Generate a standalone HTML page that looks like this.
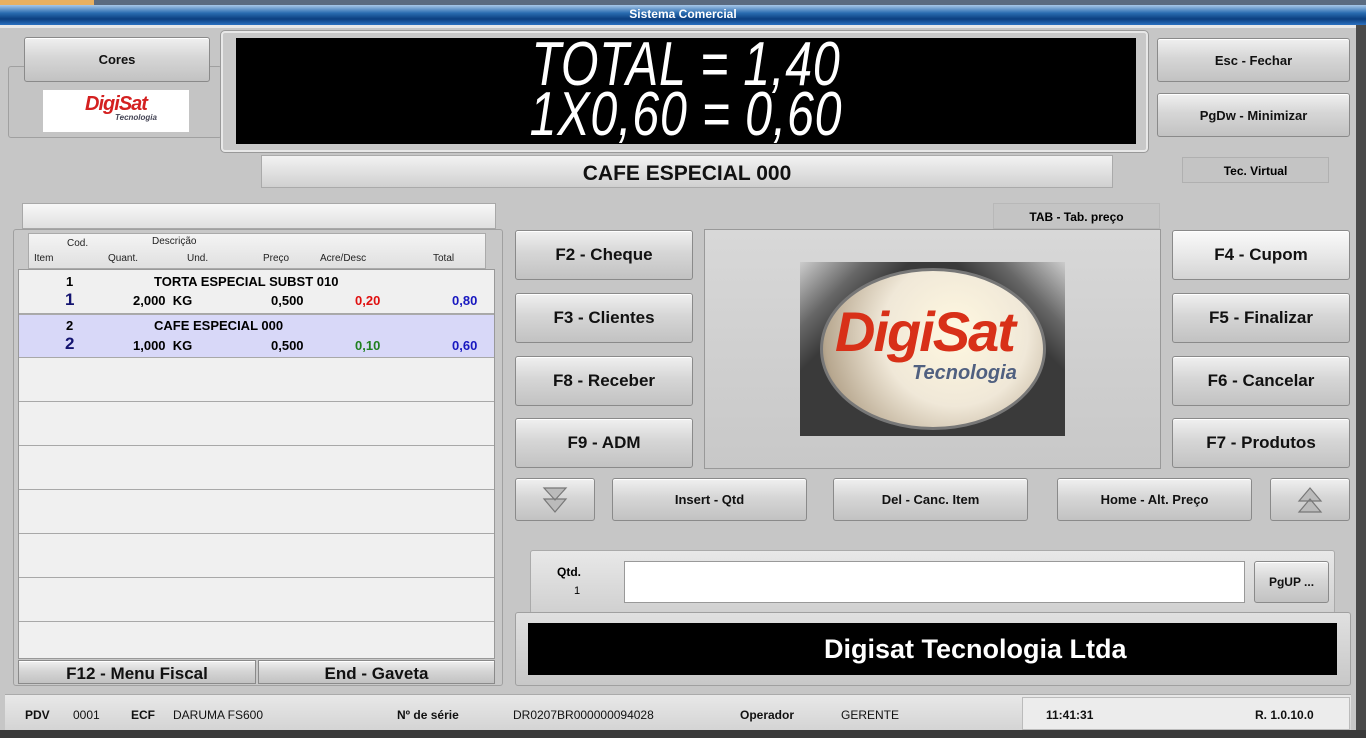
<!DOCTYPE html>
<html><head><meta charset="utf-8"><style>
*{margin:0;padding:0;box-sizing:border-box}
body{width:1366px;height:738px;overflow:hidden;background:#c6c6c6;font-family:"Liberation Sans","DejaVu Sans",sans-serif;position:relative}
.a{position:absolute}
.btn{position:absolute;background:linear-gradient(#f0f0f0,#d6d6d6 45%,#c2c2c2);border:1px solid #8a8a8a;border-radius:3px;display:flex;align-items:center;justify-content:center;font-weight:bold;color:#111;box-shadow:inset 0 1px 0 #fff}
.big{font-size:17px}
.sm{font-size:13px}
.pnl{position:absolute;background:#c8c8c8;border:1px solid #a0a0a0;border-radius:3px}
.row{position:absolute;left:19px;width:475px;height:44px;border-bottom:1px solid #a8a8a8;background:#f0f0f0}
.t{position:absolute;font-weight:bold;font-size:13px}
.h{position:absolute;font-size:10px;color:#222}
.st{position:absolute;top:708px;font-size:12px;color:#111}
</style></head><body>
<div class="a" style="left:0;top:0;width:1366px;height:6px;background:#5a6b80"></div>
<div class="a" style="left:0;top:0;width:94px;height:5px;background:#e8b060"></div>
<div class="a" style="left:0;top:5px;width:1366px;height:20px;background:linear-gradient(#a8c8e8,#2a6cb0 40%,#0c3f80 70%,#2a70c0);color:#fff;font-size:12px;font-weight:bold;text-align:center;line-height:18px">Sistema Comercial</div>
<div class="a" style="left:0;top:25px;width:1366px;height:3px;background:#e8e8e8"></div>
<div class="a" style="left:0;top:730px;width:1366px;height:8px;background:#3a3a3a"></div>
<div class="a" style="left:1356px;top:25px;width:10px;height:705px;background:#4a4a4a"></div>

<div class="pnl" style="left:8px;top:66px;width:214px;height:72px;background:#c4c4c4"></div>
<div class="btn sm" style="left:24px;top:37px;width:186px;height:45px">Cores</div>
<div class="a" style="left:43px;top:90px;width:146px;height:42px;background:#fff;text-align:center">
<div style="color:#d42020;font-weight:bold;font-style:italic;font-size:20px;line-height:20px;margin-top:4px;letter-spacing:-1px">DigiSat</div>
<div style="color:#445;font-style:italic;font-size:8px;font-weight:bold;margin-left:40px;line-height:8px">Tecnologia</div></div>

<div class="a" style="left:221px;top:31px;width:927px;height:121px;background:#c8c8c8;border:2px solid #e8e8e8;border-radius:4px;box-shadow:0 0 0 1px #999"></div>
<div class="a" style="left:236px;top:38px;width:900px;height:106px;background:#000;overflow:hidden">
<div style="position:absolute;left:0;top:2px;width:900px;color:#fff;font-style:italic;font-size:62px;line-height:50px;text-align:center;letter-spacing:1px;transform:scaleX(0.78);transform-origin:450px 0">TOTAL = 1,40<br>1X0,60 = 0,60</div></div>
<div class="a" style="left:261px;top:155px;width:852px;height:33px;background:linear-gradient(#f2f2f2,#d0d0d0);border:1px solid #aaa;font-weight:bold;font-size:21px;text-align:center;line-height:36px;color:#111">CAFE ESPECIAL 000</div>

<div class="btn sm" style="left:1157px;top:38px;width:193px;height:44px">Esc - Fechar</div>
<div class="btn sm" style="left:1157px;top:93px;width:193px;height:44px">PgDw - Minimizar</div>
<div class="a" style="left:1182px;top:157px;width:147px;height:26px;border:1px solid #b0b0b0;background:#c4c4c4;font-weight:bold;font-size:12px;text-align:center;line-height:26px">Tec. Virtual</div>

<div class="a" style="left:22px;top:203px;width:474px;height:26px;background:linear-gradient(#f8f8f8,#e0e0e0);border:1px solid #a8a8a8"></div>
<div class="pnl" style="left:13px;top:229px;width:490px;height:457px;background:#c8c8c8"></div>
<div class="a" style="left:28px;top:233px;width:458px;height:36px;background:linear-gradient(#f4f4f4,#e0e0e0);border:1px solid #aaa"></div>
<div class="h" style="left:67px;top:238px">Cod.</div><div class="h" style="left:152px;top:236px">Descrição</div>
<div class="h" style="left:34px;top:253px">Item</div><div class="h" style="left:108px;top:253px">Quant.</div><div class="h" style="left:187px;top:253px">Und.</div><div class="h" style="left:263px;top:253px">Preço</div><div class="h" style="left:320px;top:253px">Acre/Desc</div><div class="h" style="left:433px;top:253px">Total</div>
<div class="a" style="left:18px;top:269px;width:477px;height:390px;background:#f0f0f0;border:1px solid #999"></div>
<div class="row" style="top:270px"></div>
<div class="row" style="top:314px;background:#d8d8f8;border-top:1px solid #aaa"></div>
<div class="row" style="top:358px"></div><div class="row" style="top:402px"></div><div class="row" style="top:446px"></div><div class="row" style="top:490px"></div><div class="row" style="top:534px"></div><div class="row" style="top:578px"></div>
<div class="t" style="left:66px;top:274px">1</div><div class="t" style="left:154px;top:274px">TORTA ESPECIAL SUBST 010</div>
<div class="t" style="left:65px;top:290px;font-size:17px;color:#141470">1</div><div class="t" style="left:133px;top:293px">2,000&nbsp; KG</div><div class="t" style="left:271px;top:293px">0,500</div><div class="t" style="left:355px;top:293px;color:#e01010">0,20</div><div class="t" style="left:452px;top:293px;color:#1818c0">0,80</div>
<div class="t" style="left:66px;top:318px">2</div><div class="t" style="left:154px;top:318px">CAFE ESPECIAL 000</div>
<div class="t" style="left:65px;top:334px;font-size:17px;color:#141470">2</div><div class="t" style="left:133px;top:338px">1,000&nbsp; KG</div><div class="t" style="left:271px;top:338px">0,500</div><div class="t" style="left:355px;top:338px;color:#208020">0,10</div><div class="t" style="left:452px;top:338px;color:#1818c0">0,60</div>
<div class="btn big" style="left:18px;top:660px;width:238px;height:24px;border-radius:0;padding-top:4px">F12 - Menu Fiscal</div>
<div class="btn big" style="left:258px;top:660px;width:237px;height:24px;border-radius:0;padding-top:4px">End - Gaveta</div>

<div class="btn big" style="left:515px;top:230px;width:178px;height:50px">F2 - Cheque</div>
<div class="btn big" style="left:515px;top:293px;width:178px;height:50px">F3 - Clientes</div>
<div class="btn big" style="left:515px;top:356px;width:178px;height:50px">F8 - Receber</div>
<div class="btn big" style="left:515px;top:418px;width:178px;height:50px">F9 - ADM</div>
<div class="btn big" style="left:1172px;top:230px;width:178px;height:50px;background:linear-gradient(#fafafa,#e8e8e8 50%,#d4d4d4)">F4 - Cupom</div>
<div class="btn big" style="left:1172px;top:293px;width:178px;height:50px">F5 - Finalizar</div>
<div class="btn big" style="left:1172px;top:356px;width:178px;height:50px">F6 - Cancelar</div>
<div class="btn big" style="left:1172px;top:418px;width:178px;height:50px">F7 - Produtos</div>
<div class="a" style="left:993px;top:203px;width:167px;height:26px;border:1px solid #b8b8b8;background:#c4c4c4;font-weight:bold;font-size:12px;text-align:center;line-height:26px">TAB - Tab. preço</div>
<div class="a" style="left:704px;top:229px;width:457px;height:240px;background:linear-gradient(#d8d8d8,#c8c8c8);border:1px solid #999"></div>
<div class="a" style="left:800px;top:262px;width:265px;height:174px;background:#3a3a3a;overflow:hidden">
<div class="a" style="left:0;top:0;width:265px;height:174px;background:linear-gradient(135deg,#ccc 0,#666 15%,transparent 25%),linear-gradient(225deg,#ccc 0,#666 15%,transparent 25%)"></div>
<div class="a" style="left:20px;top:6px;width:226px;height:162px;border-radius:50%;background:radial-gradient(circle at 60% 40%,#fff8e0,#f0e8d8 45%,#b8a890 80%,#605848);border:3px solid #777"></div>
<div class="a" style="left:35px;top:42px;width:220px;font-weight:bold;font-style:italic;font-size:56px;line-height:56px;color:#d83018;letter-spacing:-2px">DigiSat</div>
<div class="a" style="left:112px;top:100px;font-style:italic;font-weight:bold;font-size:20px;color:#506080">Tecnologia</div>
</div>

<div class="btn" style="left:515px;top:478px;width:80px;height:43px"><svg width="30" height="30" viewBox="0 0 30 30"><path d="M4 3 L26 3 L15 15 Z M4 14 L26 14 L15 27 Z" fill="#bbb" stroke="#777" stroke-width="1.2"/></svg></div>
<div class="btn sm" style="left:612px;top:478px;width:195px;height:43px">Insert - Qtd</div>
<div class="btn sm" style="left:833px;top:478px;width:195px;height:43px">Del - Canc. Item</div>
<div class="btn sm" style="left:1057px;top:478px;width:195px;height:43px">Home - Alt. Preço</div>
<div class="btn" style="left:1270px;top:478px;width:80px;height:43px"><svg width="30" height="30" viewBox="0 0 30 30"><path d="M15 3 L26 16 L4 16 Z M15 14 L26 27 L4 27 Z" fill="#bbb" stroke="#777" stroke-width="1.2"/></svg></div>

<div class="a" style="left:530px;top:550px;width:805px;height:64px;background:linear-gradient(#e8e8e8,#d0d0d0);border:1px solid #aaa;border-radius:3px"></div>
<div class="a" style="left:557px;top:565px;font-weight:bold;font-size:12px">Qtd.</div>
<div class="a" style="left:574px;top:585px;font-size:11px">1</div>
<div class="a" style="left:624px;top:561px;width:621px;height:42px;background:#fff;border:1px solid #999"></div>
<div class="btn" style="left:1254px;top:561px;width:75px;height:42px;font-size:12px">PgUP ...</div>
<div class="pnl" style="left:515px;top:612px;width:836px;height:74px;background:linear-gradient(#e0e0e0,#c8c8c8)"></div>
<div class="a" style="left:528px;top:623px;width:809px;height:52px;background:#000;color:#fff;font-weight:bold;font-size:27px;line-height:52px;padding-left:296px">Digisat Tecnologia Ltda</div>

<div class="a" style="left:5px;top:694px;width:1346px;height:36px;background:linear-gradient(#e8e8e8,#d4d4d4);border-top:1px solid #aaa"></div>
<div class="a" style="left:1022px;top:697px;width:328px;height:33px;background:#ececec;border:1px solid #bbb"></div>
<div class="st" style="left:25px;font-weight:bold">PDV</div><div class="st" style="left:73px">0001</div>
<div class="st" style="left:131px;font-weight:bold">ECF</div><div class="st" style="left:173px">DARUMA FS600</div>
<div class="st" style="left:397px;font-weight:bold">Nº de série</div><div class="st" style="left:513px">DR0207BR000000094028</div>
<div class="st" style="left:740px;font-weight:bold">Operador</div><div class="st" style="left:841px">GERENTE</div>
<div class="st" style="left:1046px;font-weight:bold">11:41:31</div><div class="st" style="left:1255px;font-weight:bold">R. 1.0.10.0</div>
</body></html>
